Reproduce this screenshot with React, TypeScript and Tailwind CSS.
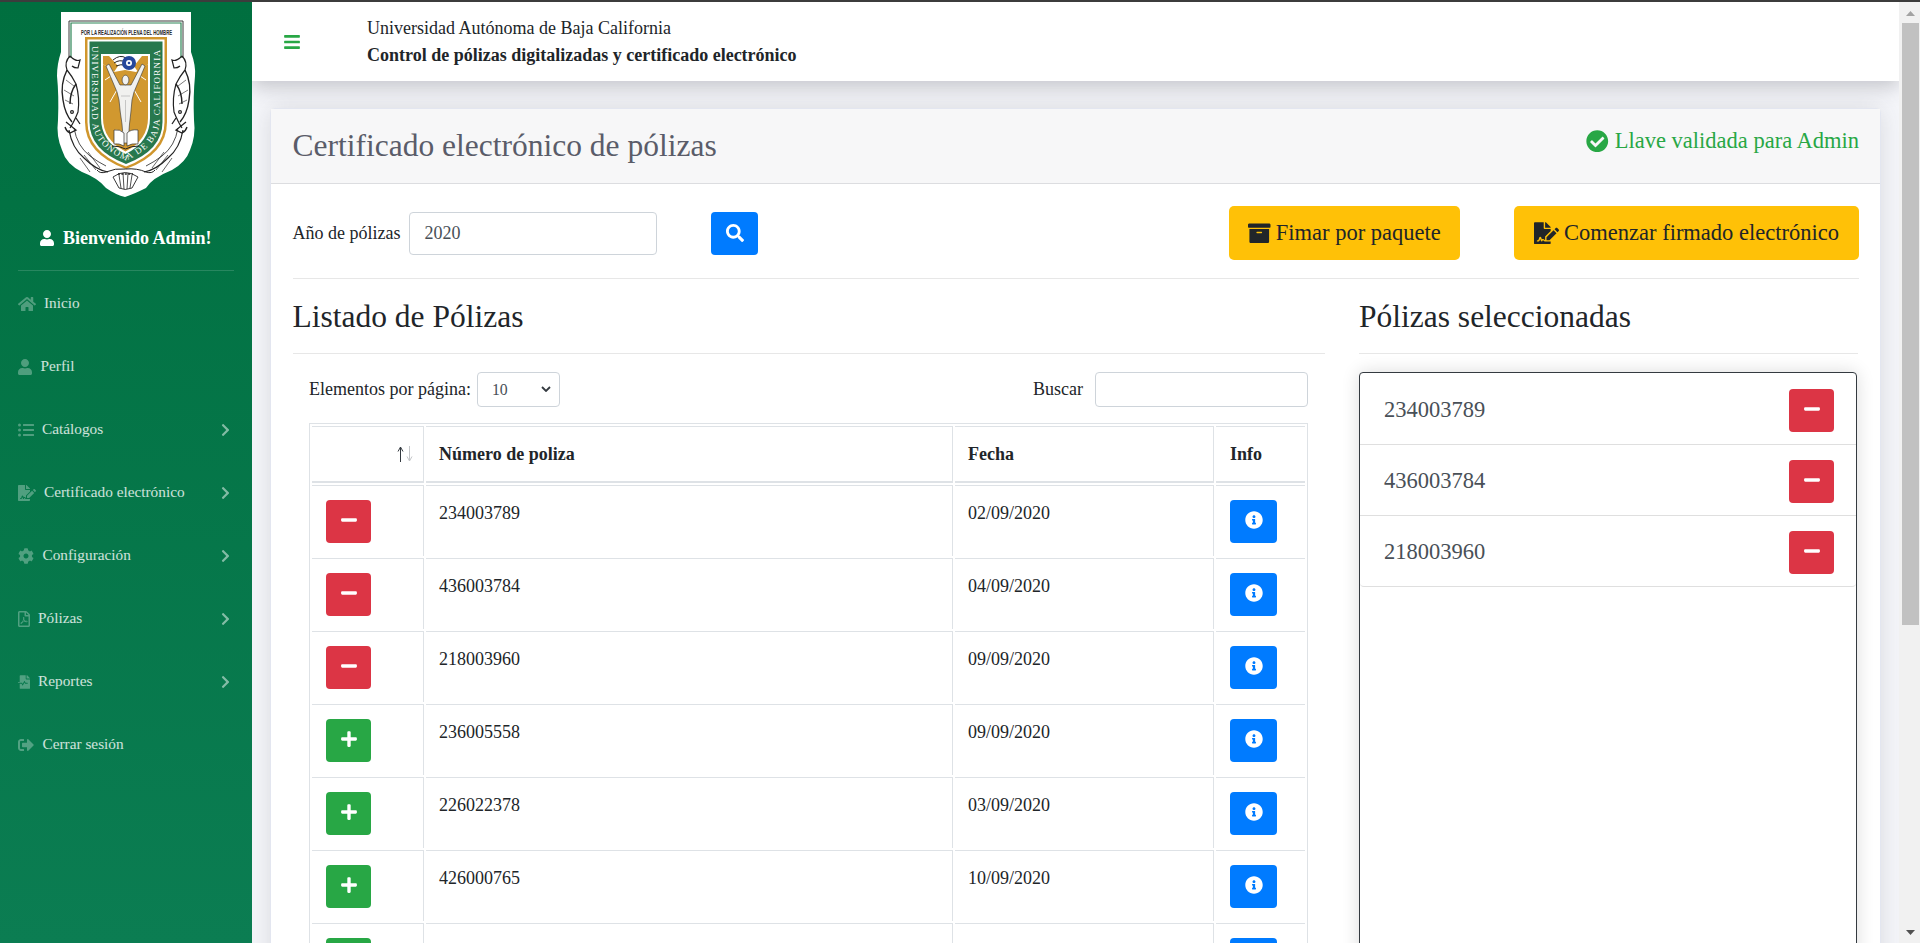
import React from "react";
import {
  FaHome, FaUser, FaListUl, FaFileSignature, FaCog, FaRegFilePdf, FaFileMedicalAlt, FaSignOutAlt,
  FaChevronRight, FaBars, FaCheckCircle, FaArchive, FaSearch, FaMinus, FaPlus, FaInfoCircle,
} from "react-icons/fa";

function Fish({ flip }: { flip?: boolean }) {
  return (
    <g transform={flip ? "translate(252 0) scale(-1 1)" : undefined} fill="none" stroke="#222" strokeWidth="1.2">
      <path d="M70 56 Q64 62 67 70 Q72 76 76 84 Q80 98 78 112 Q74 122 70 128" />
      <path d="M70 56 Q76 62 80 60 L78 68 Q74 68 72 66" />
      <path d="M67 70 Q60 84 63 100 Q65 114 72 122 M76 84 Q70 92 70 104" strokeWidth="1.4" />
      <path d="M66 80 L74 86 M64 90 L74 96 M65 100 L73 104" strokeWidth=".6" />
      <circle cx="72" cy="112" r="1.4" />
      <path d="M66 122 L76 130 L70 133 Q66 131 65 127 M76 118 L80 124" strokeWidth="1.3" />
      <path d="M69 130 Q72 148 84 158 Q96 170 108 172" strokeWidth="1.2" />
      <path d="M74 128 Q77 146 90 156 Q98 162 106 166" strokeWidth=".8" />
      <path d="M80 158 L90 172 M84 155 L96 170 M88 152 L100 168" strokeWidth=".7" />
    </g>
  );
}

function Logo() {
  return (
    <svg viewBox="40 2 170 210" className="ml-[40px] block h-[210px] w-[170px] shrink-0">
      <path d="M61 12 H191 V52 Q196 66 195 76 Q193 96 194 120 Q196 136 190 150 Q186 162 172 170 Q152 178 146 188 Q134 194 125 197 Q116 195 106 188 Q98 178 82 172 Q66 164 62 150 Q56 136 58 120 Q59 96 57 76 Q57 64 61 52 Z" fill="#fff" />
      <path d="M69 58 V21 H183 V58" fill="none" stroke="#3a3a3a" strokeWidth="1" />
      <path d="M71 58 V23 H181 V58" fill="none" stroke="#2d8556" strokeWidth="1.2" />
      <g transform="translate(126.5 34.5) scale(0.56 1)">
        <text x="0" y="0" textAnchor="middle" fontFamily="'Liberation Sans',sans-serif" fontWeight="700" fontSize="7.6" fill="#2b2b2b">POR LA REALIZACIÓN PLENA DEL HOMBRE</text>
      </g>
      <Fish />
      <Fish flip />
      <path d="M85 37 H167 V122 Q167 154 126 169 Q85 154 85 122 Z" fill="#d0962c" />
      <path d="M87.5 39.5 H164.5 V122 Q164.5 152 126 166.5 Q87.5 152 87.5 122 Z" fill="#fff" />
      <path d="M89.5 41.5 H162.5 V122 Q162.5 150 126 164 Q89.5 150 89.5 122 Z" fill="#27784d" />
      <path d="M101 54 H150 V118 Q150 142 125.5 154 Q101 142 101 118 Z" fill="#fff" />
      <path d="M103 56 H148 V118 Q148 140 125.5 151.5 Q103 140 103 118 Z" fill="#d1982f" />
      <path d="M103 56 H148 V64 L136 72 L125 70 L114 72 L103 64 Z" fill="#fff" />
      <path d="M103 56 H109 L118 66 L114 72 L103 64 Z M148 56 H142 L134 66 L138 72 L148 64 Z" fill="#d1982f" />
      <path d="M118 88 L110 102 M133 88 L141 102 M114 74 L105 80 M137 74 L146 80" stroke="#fff" strokeWidth="1" />
      <path id="uabc-band" d="M92.3 44 V120 Q92.3 146 126 160.5 Q159.7 146 159.7 120 V44" fill="none" />
      <text fontFamily="'Liberation Serif',serif" fontSize="9" fill="#fff">
        <textPath href="#uabc-band" textLength="256" lengthAdjust="spacing" startOffset="2">UNIVERSIDAD AUTÓNOMA DE BAJA CALIFORNIA</textPath>
      </text>
      <path d="M113 60 Q120 54 126 58 M114 63 Q120 59 125 62 M116 66 Q121 64 125 65" fill="none" stroke="#222" strokeWidth="1" />
      <circle cx="129" cy="63" r="7" fill="#25479b" />
      <circle cx="129" cy="63" r="3" fill="#fff" />
      <circle cx="129" cy="63" r="1.3" fill="#25479b" />
      <path d="M106 66 L109 64 L120 85 H131 L142 64 L145 66 L134 92 L132 100 Q131 112 129.5 124 L128 143 H123.5 L122 124 Q120 112 119 100 L117 92 Z" fill="#f1f1ef" stroke="#333" strokeWidth=".6" />
      <ellipse cx="125.5" cy="80" rx="3.4" ry="4.8" fill="#f1f1ef" stroke="#333" strokeWidth=".6" />
      <path d="M125.5 100 V122 M121 96 H130" stroke="#999" strokeWidth=".5" />
      <path d="M114 130 Q120 129 124 133 V146 Q119 143 114 144 Z M138 130 Q131 129 127 133 V146 Q132 143 138 144 Z" fill="#fff" stroke="#333" strokeWidth=".7" />
      <path d="M112 146 Q120 146 125.5 149 Q131 146 139 146" fill="none" stroke="#222" strokeWidth="1" />
      <path d="M106 172 Q115 168 125.5 169 Q137 168 146 172 M97 170 Q100 174 106 172 M155 170 Q152 174 146 172" fill="none" stroke="#222" strokeWidth="1" />
      <path d="M113 177 Q125 168 138 177 L132 188 Q125 191 119 188 Z" fill="#fff" stroke="#222" strokeWidth=".9" />
      <path d="M119 175 L121 188 M123 173 L124 189 M128 173 L127 189 M132 175 L130 188" stroke="#222" strokeWidth=".8" />
      <path d="M118 174 H133" stroke="#222" strokeWidth="1.6" strokeDasharray="2 1.4" />
    </svg>
  );
}

const nav: { label: string; Icon: React.ComponentType<{ className?: string }>; icon: string; gap: string; chevron: boolean }[] = [
  { label: "Inicio", Icon: FaHome, icon: "w-[18px]", gap: "ml-[8px]", chevron: false },
  { label: "Perfil", Icon: FaUser, icon: "w-[14px]", gap: "ml-[8.5px]", chevron: false },
  { label: "Catálogos", Icon: FaListUl, icon: "w-[16px]", gap: "ml-[8px]", chevron: true },
  { label: "Certificado electrónico", Icon: FaFileSignature, icon: "w-[18px]", gap: "ml-[8px]", chevron: true },
  { label: "Configuración", Icon: FaCog, icon: "w-[16px]", gap: "ml-[8.5px]", chevron: true },
  { label: "Pólizas", Icon: FaRegFilePdf, icon: "w-[12px]", gap: "ml-[8px]", chevron: true },
  { label: "Reportes", Icon: FaFileMedicalAlt, icon: "w-[12px]", gap: "ml-[8px]", chevron: true },
  { label: "Cerrar sesión", Icon: FaSignOutAlt, icon: "w-[16px]", gap: "ml-[8.5px]", chevron: false },
];

function Sidebar() {
  return (
    <aside className="flex w-[252px] shrink-0 flex-col bg-gradient-to-b from-[#006f3f] to-[#0b7d52]">
      <Logo />
      <div className="mt-[9px] flex h-[34px] items-center pl-[40px] text-[18px] font-bold text-white">
        <FaUser className="mr-[9px] h-[16px] w-[14px]" />
        Bienvenido Admin!
      </div>
      <div className="mx-[18px] mt-[15px] h-px bg-white/15" />
      <nav className="mt-[1px] flex flex-col">
        {nav.map(({ label, Icon, icon, gap, chevron }) => (
          <div key={label} className="flex h-[63px] items-center pl-[18px] pr-[22px] text-[15.3px] text-white/80">
            <Icon className={`h-[16px] shrink-0 text-white/30 ${icon}`} />
            <span className={gap}>{label}</span>
            {chevron && <FaChevronRight className="ml-auto h-[14px] w-[9px] text-white/50" />}
          </div>
        ))}
      </nav>
    </aside>
  );
}

function Header() {
  return (
    <header className="relative z-10 flex h-[79px] shrink-0 items-center bg-white pl-[32px] shadow-[0_6px_18px_rgba(58,59,69,0.26)]">
      <FaBars className="h-[18px] w-[16px] text-[#28a745]" />
      <div className="ml-[67px] text-[18px] leading-[27px] text-[#212529]">
        <div>Universidad Autónoma de Baja California</div>
        <div className="font-bold">Control de pólizas digitalizadas y certificado electrónico</div>
      </div>
    </header>
  );
}

const rows = [
  { n: "234003789", d: "02/09/2020", sel: true },
  { n: "436003784", d: "04/09/2020", sel: true },
  { n: "218003960", d: "09/09/2020", sel: true },
  { n: "236005558", d: "09/09/2020", sel: false },
  { n: "226022378", d: "03/09/2020", sel: false },
  { n: "426000765", d: "10/09/2020", sel: false },
  { n: "", d: "", sel: false },
];

function SortArrows() {
  return (
    <span className="flex justify-end gap-[2px]">
      <svg viewBox="0 0 7 16" className="h-[16px] w-[7px]">
        <path d="M3.5 16 V1 M1 5.5 L3.5 1 L6 5.5" fill="none" stroke="#343a40" strokeWidth="1" />
      </svg>
      <svg viewBox="0 0 7 16" className="h-[16px] w-[7px]">
        <path d="M3.5 0 V15 M1 10.5 L3.5 15 L6 10.5" fill="none" stroke="#c4c6c9" strokeWidth="1" />
      </svg>
    </span>
  );
}

function PolizasTable() {
  return (
    <table className="mt-[16px] w-[999px] table-fixed border-separate border-spacing-[2px] border-x border-t border-[#dee2e6] text-[18px] text-[#212529]">
      <thead>
        <tr className="h-[57px]">
          <th className="w-[112px] border-r border-t border-b-2 border-[#dee2e6] pr-[10px] align-middle font-normal">
            <SortArrows />
          </th>
          <th className="w-[527px] border-r border-t border-b-2 border-[#dee2e6] pl-[13px] text-left align-middle font-bold">Número de poliza</th>
          <th className="w-[259px] border-r border-t border-b-2 border-[#dee2e6] pl-[13px] text-left align-middle font-bold">Fecha</th>
          <th className="w-[89px] border-t border-b-2 border-[#dee2e6] pl-[14px] text-left align-middle font-bold">Info</th>
        </tr>
      </thead>
      <tbody>
        {rows.map((r, i) => (
          <tr key={i} className="h-[71px]">
            <td className="border-r border-t border-[#dee2e6] pl-[14px] pt-[14px] align-top">
              <button className={`flex h-[43px] w-[45px] items-center justify-center rounded-[4px] pb-[3px] text-white ${r.sel ? "bg-[#dc3545]" : "bg-[#28a745]"}`}>
                {r.sel ? <FaMinus className="h-[18px] w-[16px]" /> : <FaPlus className="h-[18px] w-[16px]" />}
              </button>
            </td>
            <td className="border-r border-t border-[#dee2e6] pl-[13px] pt-[14px] align-top leading-[27px]">{r.n}</td>
            <td className="border-r border-t border-[#dee2e6] pl-[13px] pt-[14px] align-top leading-[27px]">{r.d}</td>
            <td className="border-t border-[#dee2e6] pl-[14px] pt-[14px] align-top">
              <button className="flex h-[43px] w-[47px] items-center justify-center rounded-[4px] bg-[#007bff] pb-[3px] text-white">
                <FaInfoCircle className="h-[18px] w-[18px]" />
              </button>
            </td>
          </tr>
        ))}
      </tbody>
    </table>
  );
}

function Selected() {
  return (
    <div className="mt-[18px] h-[700px] w-[498px] rounded-[4px] border border-[#343a40] bg-white shadow-[0_0_18px_rgba(0,0,0,0.14)]">
      <ul className="rounded-[4px] border-b border-[#dfdfdf] pt-[1px]">
        {rows.slice(0, 3).map((r, i) => (
          <li key={r.n} className={`flex items-center justify-between pl-[24px] pr-[22px] pt-[2px] text-[22.5px] text-[#495057] ${i < 2 ? "h-[71px] border-b border-[#dfdfdf]" : "h-[70px]"}`}>
            <span>{r.n}</span>
            <button className="flex h-[43px] w-[45px] items-center justify-center rounded-[4px] bg-[#dc3545] pb-[3px] text-white">
              <FaMinus className="h-[18px] w-[16px]" />
            </button>
          </li>
        ))}
      </ul>
    </div>
  );
}

function Card() {
  return (
    <section className="ml-[17.5px] mr-[18px] mt-[27px] h-[900px] rounded-[5px] border border-[#e3e6f0] bg-white shadow-[0_0_26px_rgba(58,59,69,0.15)]">
      <div className="flex h-[75px] items-center justify-between border-b border-[#dcdde0] bg-[#f7f7f8] pl-[22px] pr-[21px]">
        <h3 className="text-[31.5px] text-[#5a5c69]">Certificado electrónico de pólizas</h3>
        <div className="mb-[10px] flex items-center text-[22.5px] text-[#28a745]">
          <FaCheckCircle className="mr-[6px] h-[22.5px] w-[22.5px]" />
          Llave validada para Admin
        </div>
      </div>
      <div className="pl-[22px] pr-[21px] pt-[22px] text-[#212529]">
        <div className="flex items-center border-b border-[#e7e7e7] pb-[18px]">
          <label className="text-[18px]">Año de pólizas</label>
          <input readOnly value="2020" className="ml-[9px] h-[43px] w-[248px] rounded-[4px] border border-[#ced4da] bg-white px-[14px] text-[18px] text-[#495057] outline-none" />
          <button className="ml-[54px] flex h-[43px] w-[47px] items-center justify-center rounded-[4px] bg-[#007bff] text-white">
            <FaSearch className="h-[18px] w-[18px]" />
          </button>
          <button className="ml-auto flex h-[54px] w-[231px] items-center justify-center rounded-[5px] bg-[#ffc107] text-[22.5px] text-[#212529]">
            <FaArchive className="mr-[5px] h-[22.5px] w-[22.5px]" />
            Fimar por paquete
          </button>
          <button className="ml-[54px] flex h-[54px] w-[345px] items-center justify-center rounded-[5px] bg-[#ffc107] text-[22.5px] text-[#212529]">
            <FaFileSignature className="mr-[5px] h-[22.5px] w-[25px]" />
            Comenzar firmado electrónico
          </button>
        </div>
        <div className="flex gap-[34px]">
          <div className="w-[1032.5px] shrink-0">
            <h4 className="flex h-[75px] items-center border-b border-[#e7e7e7] pt-[1px] text-[31.5px] text-[#212529]">Listado de Pólizas</h4>
            <div className="pl-[16.5px]">
              <div className="mt-[18px] flex h-[35px] w-[999px] items-center text-[18px]">
                <span>Elementos por página:</span>
                <div className="relative ml-[6px]">
                  <select className="block h-[35px] w-[83px] appearance-none rounded-[4px] border border-[#ced4da] bg-white pl-[14px] text-[15.75px] text-[#495057] outline-none">
                    <option>10</option>
                  </select>
                  <svg viewBox="0 0 10 6" className="pointer-events-none absolute right-[9px] top-[14px] h-[6px] w-[10px]">
                    <path d="M1 1 L5 5 L9 1" fill="none" stroke="#343a40" strokeWidth="1.8" />
                  </svg>
                </div>
                <span className="ml-auto">Buscar</span>
                <input readOnly className="ml-[12px] h-[35px] w-[213px] rounded-[4px] border border-[#ced4da] bg-white outline-none" />
              </div>
              <PolizasTable />
            </div>
          </div>
          <div className="w-[499px] shrink-0">
            <h4 className="flex h-[75px] items-center border-b border-[#e7e7e7] pt-[1px] text-[31.5px] text-[#212529]">Pólizas seleccionadas</h4>
            <Selected />
          </div>
        </div>
      </div>
    </section>
  );
}

function Scrollbar() {
  return (
    <div className="flex w-[21px] shrink-0 flex-col items-center bg-[#f1f1f1] pl-[1px]">
      <svg viewBox="0 0 9 5" className="mt-[9px] h-[5px] w-[9px] shrink-0"><path d="M4.5 0 L9 5 H0 Z" fill="#a3a3a3" /></svg>
      <div className="mt-[7px] h-[602px] w-[17px] shrink-0 bg-[#c1c1c1]" />
      <svg viewBox="0 0 9 5" className="mt-[305px] h-[5px] w-[9px] shrink-0"><path d="M0 0 H9 L4.5 5 Z" fill="#505050" /></svg>
    </div>
  );
}

export default function App() {
  return (
    <div className="flex h-[943px] w-[1920px] flex-col overflow-hidden bg-[#f5f6fa] font-['Liberation_Serif',serif]">
      <div className="h-[2px] shrink-0 bg-[#3c3c3c]" />
      <div className="flex min-h-0 flex-1">
        <Sidebar />
        <div className="flex min-w-0 flex-1 flex-col overflow-hidden">
          <Header />
          <Card />
        </div>
        <Scrollbar />
      </div>
    </div>
  );
}
